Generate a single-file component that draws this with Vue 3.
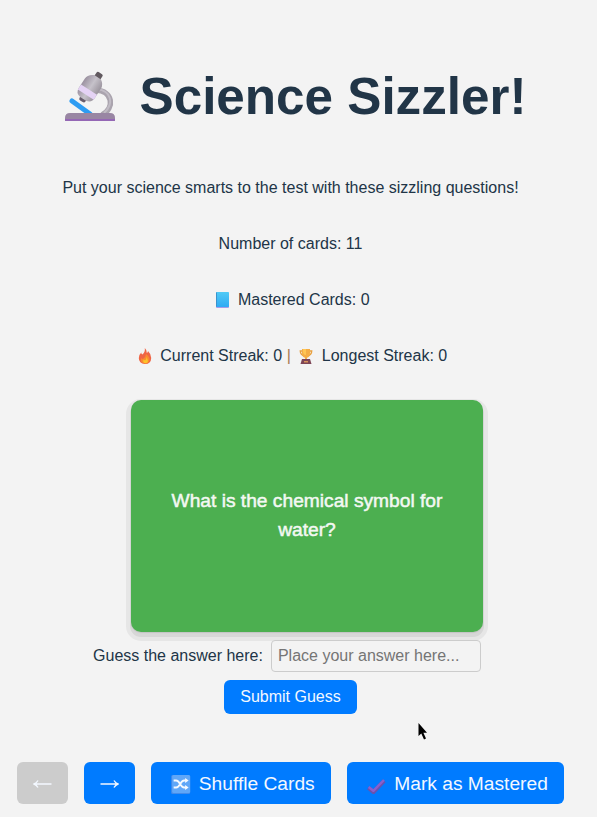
<script setup>
import { ref } from 'vue'

const guess = ref('')
const total = 11
const mastered = 0
const currentStreak = 0
const longestStreak = 0
</script>

<template>
  <main class="page">
    <h1>
      <svg class="emoji" viewBox="0 0 70 52">
        <defs>
          <linearGradient id="tube" x1="0" x2="1"><stop offset="0" stop-color="#9b91a0" /><stop offset=".5" stop-color="#c6c2ca" /><stop offset="1" stop-color="#9b949e" /></linearGradient>
        </defs>
        <path d="M41 19C58 20 60 37 47 44" fill="none" stroke="#aaa4ae" stroke-width="5.5" />
        <path d="M42 18C57 20 59 33 49 42" fill="none" stroke="#c1bcc5" stroke-width="2" />
        <path d="M17 30L35 43" stroke="#2d9cf2" stroke-width="5" stroke-linecap="round" />
        <g transform="translate(-1 1) rotate(33 36 17)">
          <rect x="32.5" y="-2" width="7" height="8" rx="1.5" fill="#61595f" />
          <rect x="32" y="26" width="7" height="6" rx="2" fill="#675c6c" />
          <path d="M32 3h8q5 3 5 8v11q0 6-6 7h-7q-6-1-6-7V11q0-5 6-8z" fill="url(#tube)" />
          <path d="M26 18h19v6H26z" fill="#e5d3f5" />
        </g>
        <path d="M10 50v-3q0-5 5-5h40q5 0 5 5v3z" fill="#9986a3" />
        <path d="M10 48h50v1q0 1-1 1H11q-1 0-1-1z" fill="#9467b5" />
      </svg>
      Science Sizzler!
    </h1>
    <p>Put your science smarts to the test with these sizzling questions!</p>
    <p>Number of cards: {{ total }}</p>
    <p>
      <svg class="emoji" viewBox="0 0 22 16">
        <defs><linearGradient id="book" x2="0" y2="1"><stop stop-color="#50caf5" /><stop offset="1" stop-color="#2faaf3" /></linearGradient></defs>
        <rect x="5" y="1" width="13" height="15" rx="1" fill="#a79be8" />
        <rect x="5" y="0" width="13" height="15" rx=".7" fill="url(#book)" />
        <path d="M5.5 .5v14" stroke="#3b92cc" />
      </svg>
      Mastered Cards: {{ mastered }}
    </p>
    <p>
      <svg class="emoji" viewBox="0 0 22 16">
        <path d="M10.8 0Q12.7 1.4 12.8 5Q14 4.5 14 3Q17.2 6 17.2 10Q17 16 11 16Q4.8 15.5 4.8 10Q5 6.5 7.3 4.5Q7.2 6 8.3 6.5Q11.4 4 10.8 0z" fill="#ef6545" />
        <path d="M12 6Q16 9 15.5 12Q14.8 15.8 11 15.5Q6 15 7 10Q8 11 9 11Q12 9 12 6z" fill="#f88b31" />
        <path d="M12.5 9Q15.7 14.4 12 15.2Q8.2 15 9.5 11.5L11 12.5Q12.7 11 12.5 9z" fill="#fdc329" />
      </svg>
      Current Streak: {{ currentStreak }} <span class="bar">|</span>
      <svg class="emoji" viewBox="0 0 22 16">
        <path d="M8 3H5.3Q5.3 7.2 10 8M14 3h2.7Q16.7 7.2 12 8" fill="none" stroke="#e8a03e" stroke-width="1.4" />
        <path d="M7 1h8v4q0 4-3 4.8V12h-2V9.8Q7 9 7 5z" fill="#f5ad45" />
        <path d="M8 1h3v6Q8 7 8 3z" fill="#ffc654" />
        <path d="M7 11h8l1.5 5h-11z" fill="#7d4555" />
        <path d="M9 13h4v1.5H9z" fill="#d8925c" />
      </svg>
      Longest Streak: {{ longestStreak }}
    </p>

    <section class="card">What is the chemical symbol for water?</section>

    <form @submit.prevent>
      <div class="field">
        <label for="guess">Guess the answer here:</label>
        <input id="guess" v-model="guess" placeholder="Place your answer here..." />
      </div>
      <button class="submit">Submit Guess</button>
    </form>

    <nav>
      <button class="arrow" disabled>
        <svg viewBox="0 0 19 12"><path d="M18.5 6H2M5 2.5Q3.5 5 1 6Q3.5 7 5 9.5" /></svg>
      </button>
      <button class="arrow">
        <svg viewBox="0 0 19 12"><path d="M.5 6H17M14 2.5Q15.5 5 18 6Q15.5 7 14 9.5" /></svg>
      </button>
      <button class="action">
        <svg class="emoji" viewBox="0 0 26 19">
          <rect x="4" y="0" width="19" height="19" rx="1.5" fill="#458be9" />
          <rect x="5" y="0" width="18" height="18" rx="1.5" fill="#60a7f8" />
          <path d="M6.5 5.5H9C13 5.5 13 12.5 17 12.5h2M6.5 12.5H9C13 12.5 13 5.5 17 5.5h2" fill="none" stroke="#f6faff" stroke-width="1.8" />
          <path d="M18 3l3.5 2.5L18 8zM18 10l3.5 2.5L18 15z" fill="#f6faff" />
        </svg>
        Shuffle Cards
      </button>
      <button class="action">
        <svg class="emoji" viewBox="0 0 26 19">
          <path d="M5.2 12.7L10.2 17L21 5.8" fill="none" stroke="#6951ad" stroke-width="4" stroke-linejoin="round" />
          <path d="M5.5 12L10.2 15.8L20.8 5" fill="none" stroke="#8960ce" stroke-width="2.4" stroke-linejoin="round" />
        </svg>
        Mark as Mastered
      </button>
    </nav>
    <svg class="cursor" viewBox="0 0 10 18"><path d="M.5 0V13L3.3 10.5L6 16.5L8 15.6L5.4 9.8H9z" fill="#000" /></svg>
  </main>
</template>

<style>
body {
  background: #f3f3f3;
  overflow: hidden;
}
</style>

<style scoped>
.page {
  width: 581px;
  height: 817px;
  box-sizing: border-box;
  padding-top: 69px;
  display: flex;
  flex-direction: column;
  align-items: center;
  color: #213547;
  background: #f3f3f3;
  font: 16px/24px "Liberation Sans", Arial, sans-serif;
}
h1 {
  display: flex;
  align-items: center;
  gap: 15px;
  margin: 0 0 51px;
  font-size: 51.2px;
  line-height: 56px;
  white-space: nowrap;
}
h1 .emoji {
  width: 70px;
  height: 52px;
}
p {
  display: flex;
  align-items: center;
  gap: 4.5px;
  height: 24px;
  margin: 0 0 32px;
  white-space: nowrap;
}
p .emoji {
  width: 22px;
  height: 16px;
}
.bar {
  color: #a8794f;
}
.card {
  width: 352px;
  height: 232px;
  box-sizing: border-box;
  flex: none;
  display: flex;
  align-items: center;
  justify-content: center;
  margin: 0 0 8px 33px;
  padding: 0 32px;
  border-radius: 10px;
  color: #f3f8f3;
  background: #4caf50;
  box-shadow: 0 1px 1px #c4c4c4, 0 4px 0 1px #d7d7d7, 0 4px 0 5px #e6e6e6;
  font-size: 19.2px;
  line-height: 28.8px;
  text-align: center;
  -webkit-text-stroke: 0.5px #f3f8f3;
}
form {
  display: flex;
  flex-direction: column;
  align-items: center;
  gap: 8px;
}
.field {
  display: flex;
  align-items: center;
  gap: 8px;
  margin-right: 7px;
}
input {
  width: 210px;
  height: 32px;
  box-sizing: border-box;
  padding: 0 6px;
  border: 1px solid #ccc;
  border-radius: 4px;
  background: transparent;
  color: #213547;
  font: inherit;
}
input::placeholder {
  color: #757575;
}
button {
  display: flex;
  align-items: center;
  justify-content: center;
  gap: 5.3px;
  height: 42px;
  padding: 0 16px;
  border: 0;
  border-radius: 6px;
  background: #007bff;
  color: #f3f8ff;
  font: 19.2px "Liberation Sans", Arial, sans-serif;
  white-space: nowrap;
}
button .emoji {
  width: 26.3px;
  height: 19px;
}
button.submit {
  height: 34px;
  font-size: 16px;
}
button.action {
  padding-top: 2px;
}
nav {
  display: flex;
  gap: 16px;
  margin-top: 48px;
}
.arrow {
  width: 51px;
}
.arrow svg {
  width: 19px;
  height: 12px;
  flex: none;
  margin-top: 2px;
  fill: none;
  stroke: #f3f8ff;
  stroke-width: 1.4;
}
.arrow:disabled {
  background: #ccc;
}
.cursor {
  position: absolute;
  left: 418px;
  top: 723px;
  width: 10px;
  height: 18px;
}
</style>
